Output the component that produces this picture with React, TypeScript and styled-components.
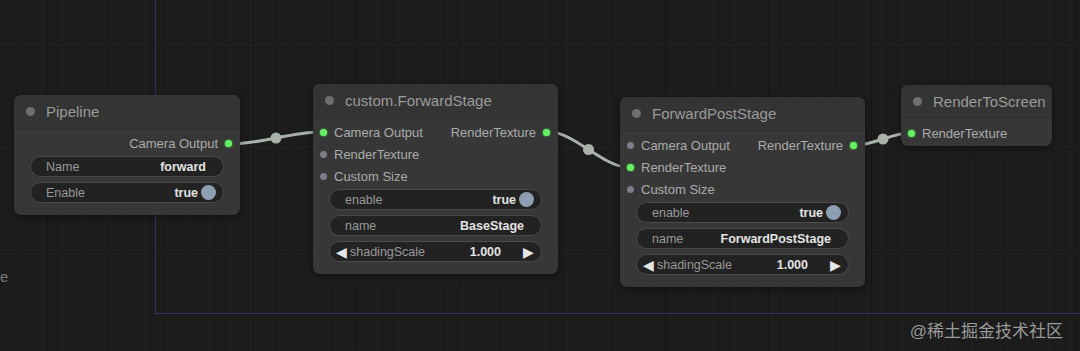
import styled, { createGlobalStyle } from 'styled-components';

const Global = createGlobalStyle`
  html, body { margin: 0; padding: 0; background: #1c1c1c; }
  body { font-family: "Liberation Sans", Arial, sans-serif; }
`;

const Canvas = styled.div`
  position: relative;
  width: 1080px;
  height: 351px;
  overflow: hidden;
  background-color: #1c1c1c;
  background-image:
    repeating-linear-gradient(90deg, transparent 0 47px, rgba(0, 0, 0, 0.22) 47px 48px, transparent 48px 103px),
    repeating-linear-gradient(90deg, transparent 0 20px, rgba(255, 255, 255, 0.012) 20px 21px),
    repeating-linear-gradient(180deg, transparent 0 44px, rgba(255, 255, 255, 0.018) 44px 45px, transparent 45px 103px);
`;

const Group = styled.div`
  position: absolute;
  left: 155px;
  top: -10px;
  width: 1000px;
  height: 323px;
  border-left: 1px solid #30306a;
  border-bottom: 1px solid #30306a;
`;

const EdgeText = styled.span`
  position: absolute;
  left: 0;
  top: 268px;
  font-size: 15px;
  color: #7a7a7a;
`;

const Links = styled.svg`
  position: absolute;
  left: 0;
  top: 0;
`;

const Node = styled.div<{ $x: number; $y: number; $w: number; $pad: number }>`
  position: absolute;
  left: ${p => p.$x}px;
  top: ${p => p.$y}px;
  width: ${p => p.$w}px;
  background: #373737;
  border-radius: 7px;
  box-shadow: 0 2px 6px rgba(0, 0, 0, 0.45);
  padding-bottom: ${p => p.$pad}px;
  display: flex;
  flex-direction: column;
`;

const Title = styled.div`
  height: 34px;
  display: flex;
  align-items: center;
  padding-left: 12px;
  gap: 11px;
  background: #343434;
  border-radius: 7px 7px 0 0;
  border-bottom: 1px solid #303030;
  box-sizing: border-box;
  font-size: 15px;
  color: #9b9b9b;
`;

const TitleDot = styled.span`
  width: 9px;
  height: 9px;
  border-radius: 50%;
  background: #6f6f6f;
`;

const Slots = styled.div`
  padding-top: 3px;
  display: flex;
  flex-direction: column;
`;

const SlotRow = styled.div`
  height: 22px;
  display: flex;
  align-items: center;
  justify-content: space-between;
  padding: 0 8px 0 7px;
  font-size: 13px;
  color: #ababab;
`;

const Slot = styled.div<{ $out?: boolean }>`
  display: flex;
  align-items: center;
  gap: 7px;
  flex-direction: ${p => (p.$out ? 'row-reverse' : 'row')};
`;

const Dot = styled.span<{ $on?: boolean }>`
  width: 7px;
  height: 7px;
  border-radius: 50%;
  background: ${p => (p.$on ? '#66ee66' : '#7c7c8a')};
  box-shadow: ${p => (p.$on ? '0 0 2px #4f4' : 'none')};
`;

const Widgets = styled.div`
  display: flex;
  flex-direction: column;
  gap: 5px;
  padding: 2px 16px 0 16px;
`;

const Widget = styled.div`
  height: 21px;
  box-sizing: border-box;
  border: 1px solid #4a4a4a;
  border-radius: 11px;
  background: #222222;
  display: flex;
  align-items: center;
  padding: 0 17px 0 15px;
  font-size: 12.5px;
  color: #999999;
`;

const Label = styled.span`
  flex: 1;
`;

const Value = styled.span`
  font-weight: bold;
  color: #e2e2e2;
`;

const Knob = styled.span`
  width: 15px;
  height: 15px;
  margin-left: 3px;
  margin-right: -10px;
  border-radius: 50%;
  background: #8e9fb3;
`;

const NumberWidget = styled(Widget)`
  padding: 0 7px 0 6px;
`;

const Arrow = styled.span<{ $right?: boolean }>`
  color: #e6e6e6;
  font-size: 14px;
  line-height: 1;
  margin: ${p => (p.$right ? '0 0 0 22px' : '0 3px 0 0')};
`;

const Watermark = styled.span`
  position: absolute;
  right: 17px;
  top: 317px;
  font-size: 17px;
  color: #9a9a9a;
  font-family: "Liberation Sans", "Noto Sans CJK SC", sans-serif;
`;

type SlotDef = { name: string; on?: boolean };
type WidgetDef = { kind: 'text' | 'toggle' | 'number'; label: string; value: string };

type NodeDef = {
  title: string;
  x: number;
  y: number;
  w: number;
  inputs: SlotDef[];
  outputs: SlotDef[];
  widgets: WidgetDef[];
};

const nodes: NodeDef[] = [
  {
    title: 'Pipeline', x: 14, y: 95, w: 226,
    inputs: [],
    outputs: [{ name: 'Camera Output', on: true }],
    widgets: [
      { kind: 'text', label: 'Name', value: 'forward' },
      { kind: 'toggle', label: 'Enable', value: 'true' },
    ],
  },
  {
    title: 'custom.ForwardStage', x: 313, y: 84, w: 245,
    inputs: [{ name: 'Camera Output', on: true }, { name: 'RenderTexture' }, { name: 'Custom Size' }],
    outputs: [{ name: 'RenderTexture', on: true }],
    widgets: [
      { kind: 'toggle', label: 'enable', value: 'true' },
      { kind: 'text', label: 'name', value: 'BaseStage' },
      { kind: 'number', label: 'shadingScale', value: '1.000' },
    ],
  },
  {
    title: 'ForwardPostStage', x: 620, y: 97, w: 245,
    inputs: [{ name: 'Camera Output' }, { name: 'RenderTexture', on: true }, { name: 'Custom Size' }],
    outputs: [{ name: 'RenderTexture', on: true }],
    widgets: [
      { kind: 'toggle', label: 'enable', value: 'true' },
      { kind: 'text', label: 'name', value: 'ForwardPostStage' },
      { kind: 'number', label: 'shadingScale', value: '1.000' },
    ],
  },
  {
    title: 'RenderToScreen', x: 901, y: 85, w: 151,
    inputs: [{ name: 'RenderTexture', on: true }],
    outputs: [],
    widgets: [],
  },
];

// output -> input pairs, in canvas pixels
const links = [
  { a: [232, 144], b: [320, 132] },
  { a: [550, 132], b: [627, 167] },
  { a: [857, 145], b: [909, 133] },
];

function linkPath(a: number[], b: number[]) {
  const d = (b[0] - a[0]) * 0.3;
  return `M${a[0]} ${a[1]} C${a[0] + d} ${a[1]} ${b[0] - d} ${b[1]} ${b[0]} ${b[1]}`;
}

function GraphNode({ n }: { n: NodeDef }) {
  const rows = Math.max(n.inputs.length, n.outputs.length);
  return (
    <Node $x={n.x} $y={n.y} $w={n.w} $pad={n.widgets.length ? 12 : 2}>
      <Title>
        <TitleDot />
        {n.title}
      </Title>
      <Slots>
        {Array.from({ length: rows }).map((_, i) => (
          <SlotRow key={i}>
            <Slot>
              {n.inputs[i] && <Dot $on={n.inputs[i].on} />}
              {n.inputs[i]?.name}
            </Slot>
            <Slot $out>
              {n.outputs[i] && <Dot $on={n.outputs[i].on} />}
              {n.outputs[i]?.name}
            </Slot>
          </SlotRow>
        ))}
      </Slots>
      {n.widgets.length > 0 && (
        <Widgets>
          {n.widgets.map(w =>
            w.kind === 'number' ? (
              <NumberWidget key={w.label}>
                <Arrow>◀</Arrow>
                <Label>{w.label}</Label>
                <Value>{w.value}</Value>
                <Arrow $right>▶</Arrow>
              </NumberWidget>
            ) : (
              <Widget key={w.label}>
                <Label>{w.label}</Label>
                <Value>{w.value}</Value>
                {w.kind === 'toggle' && <Knob />}
              </Widget>
            )
          )}
        </Widgets>
      )}
    </Node>
  );
}

export default function App() {
  return (
    <>
      <Global />
      <Canvas>
        <Group />
        <EdgeText>e</EdgeText>
        <Links width={1080} height={351}>
          {links.map((l, i) => {
            const mx = (l.a[0] + l.b[0]) / 2;
            const my = (l.a[1] + l.b[1]) / 2;
            return (
              <g key={i}>
                <path d={linkPath(l.a, l.b)} stroke="#a8b2a8" strokeWidth={3} fill="none" />
                <circle cx={mx} cy={my} r={5.5} fill="#a8b2a8" />
              </g>
            );
          })}
        </Links>
        {nodes.map(n => (
          <GraphNode key={n.title} n={n} />
        ))}
        <Watermark>@稀土掘金技术社区</Watermark>
      </Canvas>
    </>
  );
}
